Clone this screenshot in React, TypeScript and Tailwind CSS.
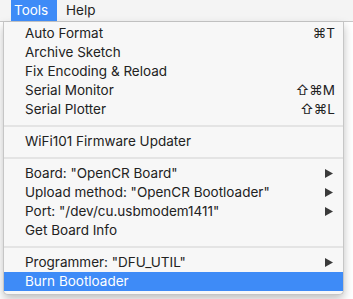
import React from 'react';

type Item =
  | { sep: true }
  | { label: string; shortcut?: string; sub?: boolean; active?: boolean; sep?: false };

const items: Item[] = [
  { label: 'Auto Format', shortcut: '⌘T' },
  { label: 'Archive Sketch' },
  { label: 'Fix Encoding & Reload' },
  { label: 'Serial Monitor', shortcut: '⇧⌘M' },
  { label: 'Serial Plotter', shortcut: '⇧⌘L' },
  { sep: true },
  { label: 'WiFi101 Firmware Updater' },
  { sep: true },
  { label: 'Board: "OpenCR Board"', sub: true },
  { label: 'Upload method: "OpenCR Bootloader"', sub: true },
  { label: 'Port: "/dev/cu.usbmodem1411"', sub: true },
  { label: 'Get Board Info' },
  { sep: true },
  { label: 'Programmer: "DFU_UTIL"', sub: true },
  { label: 'Burn Bootloader', active: true },
];

function Arrow() {
  return (
    <svg width="8" height="9" viewBox="0 0 8 9" className="block mr-[2px]">
      <path d="M0 0 L8 4.5 L0 9 Z" fill="#3a3a3a" />
    </svg>
  );
}

export default function App() {
  return (
    <div className="w-[353px] h-[299px] bg-white overflow-hidden text-[13.5px] text-[#222222] font-['Inter',sans-serif]">
      <div className="h-[22px] bg-[#f4f4f4] border-b border-[#c8c8c8] flex items-stretch pl-[11px]">
        <div className="w-[46px] pl-[3px] bg-[#3e8bf7] text-white flex items-center">Tools</div>
        <div className="pl-[9px] flex items-center">Help</div>
      </div>
      <div className="ml-[3px] w-[341px] bg-[#f7f7f7] border-x border-b border-[#c6c6c6] rounded-b-[5px] shadow-[0_4px_10px_rgba(0,0,0,0.25)] pt-[2px] pb-[3px]">
        {items.map((it, i) =>
          it.sep ? (
            <div key={i} className="h-[13px] flex items-center">
              <div className="h-[2px] w-full bg-[#e4e4e4]" />
            </div>
          ) : (
            <div
              key={i}
              className={`h-[19px] flex items-center pl-[21px] pr-[8px] ${it.active ? 'bg-[#3e8bf7] text-white' : ''}`}
            >
              <span className="flex-1 whitespace-nowrap">{it.label}</span>
              {it.shortcut && <span className="whitespace-nowrap">{it.shortcut}</span>}
              {it.sub && <Arrow />}
            </div>
          )
        )}
      </div>
    </div>
  );
}
